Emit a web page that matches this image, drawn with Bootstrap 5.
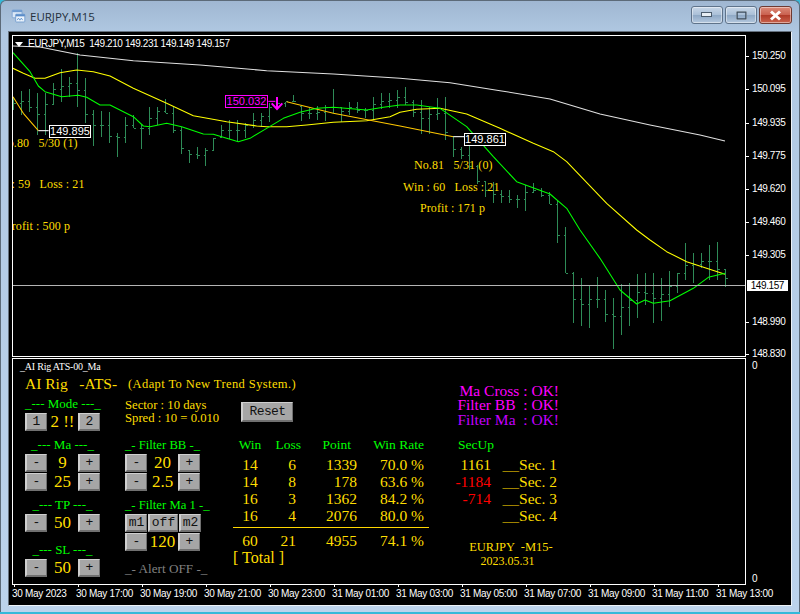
<!DOCTYPE html>
<html lang="en">
<head>
<meta charset="utf-8">
<title>EURJPY,M15</title>
<link href="https://cdn.jsdelivr.net/npm/bootstrap@5.3.0/dist/css/bootstrap.min.css" rel="stylesheet">
<style>
html,body{margin:0;width:800px;height:614px;overflow:hidden;background:#35b9d9}
.mt-window{width:800px;height:612px;border:1px solid #5c6a78;border-bottom:0;border-radius:6px 6px 0 0;background:linear-gradient(#a0b7d2 0,#b0c8e2 32px,#bcd3ec 100%)}
.mt-titlebar{height:30px;padding:0 7px 0 10px}
.mt-title{font:11.5px "Open Sans",sans-serif;color:#25303c;margin-left:4px;padding-top:1px}
.mt-ctl{height:18px;border:1px solid #5f738a;border-radius:3px;background:linear-gradient(#c8d7e8 0,#a9bfd7 50%,#8fa9c6 52%,#b4c8de 100%);box-shadow:inset 0 0 0 1px rgba(255,255,255,.45);padding:0;display:flex;align-items:center;justify-content:center;margin-top:-2px}
.mt-ctl-a{width:32px;margin-right:2px}
.mt-ctl-c{width:33px;background:linear-gradient(#dc8a78 0,#c9604f 50%,#b03a28 52%,#c9634e 100%);border-color:#6e3a32}
.mt-client{width:784px;height:575px;margin-left:7px;border:1px solid;border-color:#66727f #eef3f8 #eef3f8 #66727f;background:#000;padding:3px 0 0 3px;color:#fff}
.mt-left{width:734px}
.mt-pane{border:1px solid #fff}
.mt-pane-main{height:322px;margin-bottom:1px;position:relative;overflow:hidden}
.mt-pane-sub{height:227px;padding:1px 0 0 12px;overflow:hidden}
.mt-chart{position:absolute;left:0;top:0;display:block}
.sys-font{font-family:"Liberation Sans",sans-serif;font-size:10px;letter-spacing:-.4px;line-height:14px}
.chart-head{position:absolute;left:15px;top:1px;color:#fff;white-space:pre}
.chart-tri{position:absolute;left:2px;top:6px;width:0;height:0;border:4.5px solid transparent;border-top:5px solid #fff;border-bottom:0}
.obj-label{position:absolute;height:13px;width:42px;text-align:center;font:11px/11px "Liberation Sans",sans-serif;background:#000;border:1px solid #fff;color:#fff}
.obj-pink{border-color:#f0f;color:#f0f;width:43px}
.chart-note{position:absolute;white-space:pre;font:12px/16px "Liberation Serif",serif;letter-spacing:.1px;color:#ffde00}
.mt-axis-r{width:47px;position:relative}
.price{position:absolute;left:6px;height:14px;color:#fff;white-space:nowrap}
.price::before{content:"";position:absolute;left:-6px;top:7px;width:3px;height:1px;background:#fff}
.price-now{left:1px;height:11px;width:41px;background:#fff;color:#000;line-height:11px;text-align:right;padding-right:4px}
.price-now::before{display:none}
.price-zero::before{display:none}
.time-axis{height:20px;letter-spacing:-.3px}
.time-tick{width:64px;flex:0 0 64px;position:relative;white-space:nowrap;color:#fff;padding-top:2px}
.time-tick::before{content:"";position:absolute;left:2px;top:-1px;width:1px;height:3px;background:#fff}
.panel-name{font:10px/14px "Liberation Serif",serif;letter-spacing:-.2px;color:#fff;margin-left:-5px}
.panel-head{height:18px;margin:1px 0 2px;white-space:pre;color:#ffde00;font-family:"Liberation Serif",serif}
.panel-brand{font-size:15.5px;line-height:18px;width:103px}
.panel-slogan{font-size:12.5px;line-height:18px;letter-spacing:.4px}
.panel-left{width:420px}
.ctl-col-a{width:100px}
.ctl-col-b{width:108px}
.ctl-col-c{width:212px}
.ctl-grp{width:75px}
.ctl-title{height:18px;font:13px/18px "Liberation Serif",serif;color:#0f0;white-space:pre;text-align:center}
.ctl-title-l{text-align:left;font-size:12.7px}
.ctl-gap5{margin-top:5px}
.ctl-gap8{margin-top:9px}
.ctl-row{height:18px;margin-bottom:1px}
.ctl-val{font:17px/18px "Liberation Serif",serif;color:#ffde00;flex:1 1 auto;text-align:center;white-space:pre}
.btn.mt-key{--bs-btn-border-radius:0;width:22px;height:18px;flex:0 0 22px;padding:0;font:13px/14px "Liberation Mono",monospace;color:#111;background:#a6a6a6;border-width:1px 1px 2px 2px;border-style:solid;border-color:#cfcfcf #707070 #707070 #cfcfcf;box-shadow:none}
.btn.mt-key-wide{width:30px;flex:0 0 30px;margin:0 1px}
.btn.mt-key-reset{width:52px;height:20px;flex:none;letter-spacing:-.6px;margin:7px 0 14px 8px;display:block;line-height:16px}
.sector-info{font:12.7px/13px "Liberation Serif",serif;color:#ffde00;padding-top:4px;height:41px;white-space:pre}
.alert-off{margin-top:9px;color:#808080;text-align:left;font-size:13.2px}
.stats{display:grid;grid-template-columns:34px 29px 61px 67px 5px;width:196px;font:15.5px/17px "Liberation Serif",serif;color:#ffde00;text-align:right;margin-top:1px}
.stats-head{color:#0f0;font-size:13.5px;line-height:18px;margin-bottom:2px}
.stat-c{text-align:center}
.stat-loss-h{margin-right:-5px}
.stat-point-h{margin-right:6px}
.stats-rule{grid-column:1/-1;border-top:1px solid #ffd700;margin:3px 0 4px;height:0}
.stats-total{line-height:18px;font-size:16px;text-align:left;grid-column:1/-1}
.panel-right{width:115px;padding-top:23.5px;font-family:"Liberation Serif",serif}
.ok-line{font-size:15.5px;line-height:14.5px;text-align:right;white-space:pre;color:#f0f;padding-right:1px}
.ok-violet{color:#c400ff}
.sec-head{color:#0f0;font-size:13.5px;line-height:18px;margin:9px 0 2px 13px}
.sec-row{height:17px;font-size:15.5px;line-height:17px;color:#ffde00}
.sec-num{width:46px;text-align:right}
.sec-name{width:66px;text-align:right;white-space:pre}
.sec-bar{font-size:11px}
.sec-neg{color:#f00}
.pair-name{margin-top:16px;font-size:12.5px;line-height:14px;color:#ffde00;white-space:pre;text-align:center;padding-left:7px;width:125px}
.pair-date{font-size:12px;line-height:14px;color:#ffde00;text-align:center;width:125px}
</style>
</head>
<body>
<div class="mt-window">
  <div class="mt-titlebar d-flex align-items-center">
    <svg width="15" height="14" viewBox="0 0 21 20" aria-hidden="true">
      <rect x="1.5" y="1.5" width="14" height="11" rx="1" fill="#dbe8f6" stroke="#6f9bd0"/>
      <rect x="1.5" y="1.5" width="14" height="3" fill="#6f9bd0"/>
      <rect x="6.5" y="7.5" width="13" height="11" rx="1" fill="#eef5fc" stroke="#5a8cc8"/>
      <rect x="6.5" y="7.5" width="13" height="3" fill="#5a8cc8"/>
      <path d="M8.5 16l2-3 2 3 2-3 2 3" fill="none" stroke="#3f7cc4"/>
    </svg>
    <span class="mt-title">EURJPY,M15</span>
    <div class="ms-auto d-flex">
      <div class="mt-ctl mt-ctl-a"><svg width="12" height="6" viewBox="0 0 12 6"><rect x=".5" y=".5" width="10" height="4" fill="#e8eef4" stroke="#4c5c6c"/></svg></div>
      <div class="mt-ctl mt-ctl-a"><svg width="11" height="9" viewBox="0 0 11 9"><rect x="1" y="1" width="9" height="7" fill="none" stroke="#3c4c5c" stroke-width="1.5"/><rect x="0" y="0" width="11" height="9" fill="none" stroke="#e8eef4" stroke-width=".5"/></svg></div>
      <div class="mt-ctl mt-ctl-c"><svg width="13" height="11" viewBox="0 0 13 11"><path d="M2 1.5l9 8M11 1.5l-9 8" stroke="#fff" stroke-width="3" fill="none"/></svg></div>
    </div>
  </div>
  <div class="mt-client d-flex">
    <div class="mt-left">
      <div class="mt-pane mt-pane-main">
        <svg id="chart" class="mt-chart" width="732" height="320" viewBox="39 108 2196 960" aria-hidden="true">
          <g id="bars" stroke="#2e8b57" stroke-width="3" fill="none" shape-rendering="crispEdges"></g>
          <g fill="none" stroke-width="3.2" stroke-linejoin="round">
            <polyline stroke="#e0e0e0" points="39,138 120,141 240,165 400,182 600,195 800,212 1000,222 1200,235 1350,248 1500,272 1650,297 1800,342 1950,375 2100,405 2175,423"/>
            <polyline stroke="#ffff00" points="39,205 70,220 105,235 135,235 180,218 230,210 280,215 330,228 400,265 500,310 580,347 680,365 770,378 800,380 860,380 920,375 1000,367 1100,362 1170,350 1200,337 1250,328 1320,325 1400,342 1500,385 1600,430 1660,455 1700,485 1820,610 1910,690 1950,720 2000,755 2060,785 2175,823"/>
            <polyline stroke="#ffc800" points="39,290 70,340 115,392"/>
            <polyline stroke="#ffc800" points="860,305 1000,340 1200,378 1360,410"/>
            <polyline stroke="#fff" points="115,392 146,392"/>
            <polyline stroke="#fff" points="1360,410 1395,410"/>
            <polyline stroke="#00ff00" points="39,158 90,215 115,258 135,275 185,290 235,286 260,292 300,315 330,315 400,350 430,378 450,380 500,370 545,380 610,402 640,403 690,418 715,425 750,415 800,385 850,355 900,337 950,325 1000,322 1100,330 1150,322 1200,315 1250,315 1320,325 1400,380 1480,470 1550,545 1650,582 1700,625 1740,690 1800,775 1860,870 1910,912 1935,900 1960,910 2010,902 2080,865 2125,832 2175,820"/>
            <polyline stroke="#b4b4b4" shape-rendering="crispEdges" points="39,856 2235,856"/>
            <polyline stroke="#f0f" points="805,304 826,304"/>
          </g>
          <path d="M831 291v34M815 310l16 17 16-17" fill="none" stroke="#f0f" stroke-width="6"/>
        </svg>
        <span class="chart-tri"></span>
        <span class="chart-head sys-font">EURJPY,M15  149.210 149.231 149.149 149.157</span>
        <span class="obj-label" style="left:36px;top:89px">149.895</span>
        <span class="obj-label" style="left:451px;top:97px">149.861</span>
        <span class="obj-label obj-pink" style="left:212px;top:59px">150.032</span>
        <span class="chart-note" style="left:-14px;top:99px">No.80   5/30 (1)</span>
        <span class="chart-note" style="left:-25px;top:140px">Win : 59   Loss : 21</span>
        <span class="chart-note" style="left:-8px;top:182px">Profit : 500 p</span>
        <span class="chart-note" style="left:401px;top:121px">No.81   5/31 (0)</span>
        <span class="chart-note" style="left:390px;top:143px">Win : 60   Loss : 21</span>
        <span class="chart-note" style="left:407px;top:164px">Profit : 171 p</span>
      </div>
      <div class="mt-pane mt-pane-sub d-flex">
        <div class="panel-left">
          <div class="panel-name">_AI Rig ATS-00_Ma</div>
          <div class="panel-head d-flex"><span class="panel-brand">AI Rig   -ATS-</span><span class="panel-slogan">(Adapt To New Trend System.)</span></div>
          <div class="d-flex">
            <div class="ctl-col-a">
              <div class="ctl-grp">
                <div class="ctl-title">_--- Mode ---_</div>
                <div class="ctl-row d-flex"><button class="btn mt-key">1</button><span class="ctl-val">2 !!</span><button class="btn mt-key">2</button></div>
                <div class="ctl-title ctl-gap5">_--- Ma ---_</div>
                <div class="ctl-row d-flex"><button class="btn mt-key">-</button><span class="ctl-val">9</span><button class="btn mt-key">+</button></div>
                <div class="ctl-row d-flex"><button class="btn mt-key">-</button><span class="ctl-val">25</span><button class="btn mt-key">+</button></div>
                <div class="ctl-title ctl-gap5">_--- TP ---_</div>
                <div class="ctl-row d-flex"><button class="btn mt-key">-</button><span class="ctl-val">50</span><button class="btn mt-key">+</button></div>
                <div class="ctl-title ctl-gap8">_--- SL ---_</div>
                <div class="ctl-row d-flex"><button class="btn mt-key">-</button><span class="ctl-val">50</span><button class="btn mt-key">+</button></div>
              </div>
            </div>
            <div class="ctl-col-b">
              <div class="sector-info">Sector : 10 days
Spred : 10 = 0.010</div>
              <div class="ctl-grp">
                <div class="ctl-title ctl-title-l">_- Filter BB -_</div>
                <div class="ctl-row d-flex"><button class="btn mt-key">-</button><span class="ctl-val">20</span><button class="btn mt-key">+</button></div>
                <div class="ctl-row d-flex"><button class="btn mt-key">-</button><span class="ctl-val">2.5</span><button class="btn mt-key">+</button></div>
                <div class="ctl-title ctl-title-l ctl-gap5">_- Filter Ma 1 -_</div>
                <div class="ctl-row d-flex"><button class="btn mt-key">m1</button><button class="btn mt-key mt-key-wide">off</button><button class="btn mt-key">m2</button></div>
                <div class="ctl-row d-flex"><button class="btn mt-key">-</button><span class="ctl-val">120</span><button class="btn mt-key">+</button></div>
                <div class="ctl-title alert-off">_- Alert OFF -_</div>
              </div>
            </div>
            <div class="ctl-col-c">
              <button class="btn mt-key mt-key-reset">Reset</button>
              <div class="stats">
                <span class="stats-head stat-c">Win</span><span class="stats-head stat-loss-h">Loss</span><span class="stats-head stat-point-h">Point</span><span class="stats-head">Win Rate</span><span></span>
                <span class="stat-c">14</span><span>6</span><span>1339</span><span>70.0 %</span><span></span>
                <span class="stat-c">14</span><span>8</span><span>178</span><span>63.6 %</span><span></span>
                <span class="stat-c">16</span><span>3</span><span>1362</span><span>84.2 %</span><span></span>
                <span class="stat-c">16</span><span>4</span><span>2076</span><span>80.0 %</span><span></span>
                <div class="stats-rule"></div>
                <span class="stat-c">60</span><span>21</span><span>4955</span><span>74.1 %</span><span></span>
                <div class="stats-total">[ Total ]</div>
              </div>
            </div>
          </div>
        </div>
        <div class="panel-right">
          <div class="ok-line">Ma Cross : OK!</div>
          <div class="ok-line">Filter BB  : OK!</div>
          <div class="ok-line ok-violet">Filter Ma  : OK!</div>
          <div class="sec-head">SecUp</div>
          <div class="sec-row d-flex"><span class="sec-num">1161</span><span class="sec-name"><span class="sec-bar">___</span>Sec. 1</span></div>
          <div class="sec-row d-flex"><span class="sec-num sec-neg">-1184</span><span class="sec-name"><span class="sec-bar">___</span>Sec. 2</span></div>
          <div class="sec-row d-flex"><span class="sec-num sec-neg">-714</span><span class="sec-name"><span class="sec-bar">___</span>Sec. 3</span></div>
          <div class="sec-row d-flex"><span class="sec-num"></span><span class="sec-name"><span class="sec-bar">___</span>Sec. 4</span></div>
          <div class="pair-name">EURJPY  -M15-</div>
          <div class="pair-date">2023.05.31</div>
        </div>
      </div>
      <div class="time-axis d-flex sys-font">
        <span class="time-tick">30 May 2023</span><span class="time-tick">30 May 17:00</span><span class="time-tick">30 May 19:00</span><span class="time-tick">30 May 21:00</span><span class="time-tick">30 May 23:00</span><span class="time-tick">31 May 01:00</span><span class="time-tick">31 May 03:00</span><span class="time-tick">31 May 05:00</span><span class="time-tick">31 May 07:00</span><span class="time-tick">31 May 09:00</span><span class="time-tick">31 May 11:00</span><span class="time-tick">31 May 13:00</span>
      </div>
    </div>
    <div class="mt-axis-r sys-font">
      <span class="price" style="top:14px">150.250</span>
      <span class="price" style="top:47px">150.095</span>
      <span class="price" style="top:81px">149.935</span>
      <span class="price" style="top:114px">149.775</span>
      <span class="price" style="top:147px">149.620</span>
      <span class="price" style="top:180px">149.460</span>
      <span class="price" style="top:213px">149.305</span>
      <span class="price price-now" style="top:245px">149.157</span>
      <span class="price" style="top:280px">148.990</span>
      <span class="price" style="top:312px">148.830</span>
      <span class="price price-zero" style="top:324px">0</span>
      <span class="price price-zero" style="top:537px">0</span>
    </div>
  </div>
</div>
<script src="https://cdn.jsdelivr.net/npm/bootstrap@5.3.0/dist/js/bootstrap.bundle.min.js"></script>
<script>
// bar extremes [high, low] measured in 1/3 pixel units
var hl=[[290,330],[272,345],[268,335],[280,405],[278,405],[250,315],[208,305],[232,290],[158,320],[235,368],[330,437],[332,410],[335,430],[400,472],[350,430],[345,385],[372,448],[322,405],[322,375],[298,340],[318,400],[382,462],[450,488],[442,478],[445,497],[415,450],[375,412],[360,418],[360,425],[368,415],[340,385],[340,380],[310,365],[295,325],[305,320],[285,305],[320,362],[325,358],[318,360],[315,362],[268,340],[320,365],[305,345],[305,340],[325,355],[290,360],[280,328],[280,325],[270,325],[262,315],[300,352],[300,402],[320,402],[295,360],[290,420],[408,472],[440,478],[438,510],[495,552],[545,590],[545,608],[570,608],[570,608],[585,625],[555,632],[548,578],[565,590],[575,612],[600,730],[680,820],[815,968],[835,978],[855,983],[830,925],[870,965],[895,1047],[853,1005],[850,978],[822,955],[820,915],[818,968],[835,962],[812,922],[820,880],[730,840],[760,850],[760,805],[735,840],[726,840],[808,860]];
function clamp(v,a,b){return Math.max(a,Math.min(b,v));}
var d="",prev=null;
hl.forEach(function(b,i){
  var x=40.5+24*i,next=hl[i+1]||b;
  var c=clamp(((b[0]+b[1])+(next[0]+next[1]))/4,b[0],b[1]);
  var o=prev===null?(b[0]+b[1])/2:clamp(prev,b[0],b[1]);
  d+="M"+x+" "+b[0]+"V"+b[1]+"M"+(x-6)+" "+o+"H"+x+"M"+x+" "+c+"H"+(x+6);
  prev=c;
});
var p=document.createElementNS("http://www.w3.org/2000/svg","path");
p.setAttribute("d",d);
document.getElementById("bars").appendChild(p);
</script>
</body>
</html>
